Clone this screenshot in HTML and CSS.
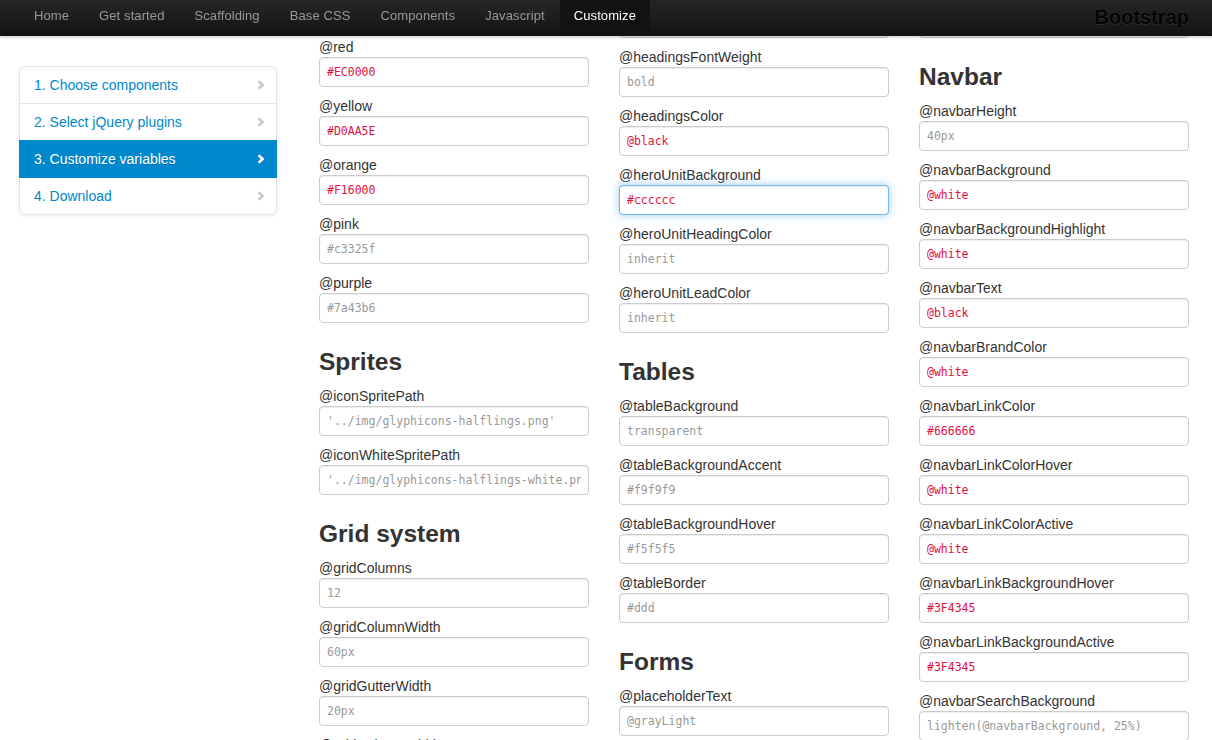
FILE: index.html
```html
<!DOCTYPE html>
<html lang="en">
<head>
<meta charset="utf-8">
<title>Customize · Bootstrap</title>
<link rel="stylesheet" href="styles.css">
</head>
<body>
<header class="navbar">
  <div class="navbar-inner">
    <nav class="nav">
      <a href="#">Home</a>
      <a href="#">Get started</a>
      <a href="#">Scaffolding</a>
      <a href="#">Base CSS</a>
      <a href="#">Components</a>
      <a href="#">Javascript</a>
      <a href="#" class="active">Customize</a>
    </nav>
    <a class="brand" href="#">Bootstrap</a>
  </div>
</header>

<div class="page">
  <aside class="sidebar">
    <ul class="sidenav">
      <li><a href="#">1. Choose components<svg class="chev" viewBox="0 0 8 10" width="8" height="10"><path d="M1.6 1.2 L5.6 5 L1.6 8.8"/></svg></a></li>
      <li><a href="#">2. Select jQuery plugins<svg class="chev" viewBox="0 0 8 10" width="8" height="10"><path d="M1.6 1.2 L5.6 5 L1.6 8.8"/></svg></a></li>
      <li class="active"><a href="#">3. Customize variables<svg class="chev" viewBox="0 0 8 10" width="8" height="10"><path d="M1.6 1.2 L5.6 5 L1.6 8.8"/></svg></a></li>
      <li><a href="#">4. Download<svg class="chev" viewBox="0 0 8 10" width="8" height="10"><path d="M1.6 1.2 L5.6 5 L1.6 8.8"/></svg></a></li>
    </ul>
  </aside>

  <main class="vars">
    <section class="col col-a">
      <div class="field"><label>@red</label><input type="text" class="set" value="#EC0000"></div>
      <div class="field"><label>@yellow</label><input type="text" class="set" value="#D0AA5E"></div>
      <div class="field"><label>@orange</label><input type="text" class="set" value="#F16000"></div>
      <div class="field"><label>@pink</label><input type="text" placeholder="#c3325f"></div>
      <div class="field"><label>@purple</label><input type="text" placeholder="#7a43b6"></div>
      <h3>Sprites</h3>
      <div class="field"><label>@iconSpritePath</label><input type="text" placeholder="'../img/glyphicons-halflings.png'"></div>
      <div class="field"><label>@iconWhiteSpritePath</label><input type="text" placeholder="'../img/glyphicons-halflings-white.png'"></div>
      <h3>Grid system</h3>
      <div class="field"><label>@gridColumns</label><input type="text" placeholder="12"></div>
      <div class="field"><label>@gridColumnWidth</label><input type="text" placeholder="60px"></div>
      <div class="field"><label>@gridGutterWidth</label><input type="text" placeholder="20px"></div>
      <div class="field"><label>@gridColumnWidth1200</label><input type="text" placeholder="70px"></div>
    </section>

    <section class="col col-b">
      <div class="field stub"><input type="text" aria-label="@headingsFontFamily"></div>
      <div class="field"><label>@headingsFontWeight</label><input type="text" placeholder="bold"></div>
      <div class="field"><label>@headingsColor</label><input type="text" class="set" value="@black"></div>
      <div class="field"><label>@heroUnitBackground</label><input type="text" class="set focus" value="#cccccc"></div>
      <div class="field"><label>@heroUnitHeadingColor</label><input type="text" placeholder="inherit"></div>
      <div class="field"><label>@heroUnitLeadColor</label><input type="text" placeholder="inherit"></div>
      <h3>Tables</h3>
      <div class="field"><label>@tableBackground</label><input type="text" placeholder="transparent"></div>
      <div class="field"><label>@tableBackgroundAccent</label><input type="text" placeholder="#f9f9f9"></div>
      <div class="field"><label>@tableBackgroundHover</label><input type="text" placeholder="#f5f5f5"></div>
      <div class="field"><label>@tableBorder</label><input type="text" placeholder="#ddd"></div>
      <h3>Forms</h3>
      <div class="field"><label>@placeholderText</label><input type="text" placeholder="@grayLight"></div>
    </section>

    <section class="col col-c">
      <div class="field stub"><input type="text" aria-label="@dropdownLinkColorHover"></div>
      <h3>Navbar</h3>
      <div class="field"><label>@navbarHeight</label><input type="text" placeholder="40px"></div>
      <div class="field"><label>@navbarBackground</label><input type="text" class="set" value="@white"></div>
      <div class="field"><label>@navbarBackgroundHighlight</label><input type="text" class="set" value="@white"></div>
      <div class="field"><label>@navbarText</label><input type="text" class="set" value="@black"></div>
      <div class="field"><label>@navbarBrandColor</label><input type="text" class="set" value="@white"></div>
      <div class="field"><label>@navbarLinkColor</label><input type="text" class="set" value="#666666"></div>
      <div class="field"><label>@navbarLinkColorHover</label><input type="text" class="set" value="@white"></div>
      <div class="field"><label>@navbarLinkColorActive</label><input type="text" class="set" value="@white"></div>
      <div class="field"><label>@navbarLinkBackgroundHover</label><input type="text" class="set" value="#3F4345"></div>
      <div class="field"><label>@navbarLinkBackgroundActive</label><input type="text" class="set" value="#3F4345"></div>
      <div class="field"><label>@navbarSearchBackground</label><input type="text" placeholder="lighten(@navbarBackground, 25%)"></div>
    </section>
  </main>
</div>
</body>
</html>
```

FILE: styles.css
```css
html, body {
  margin: 0;
  padding: 0;
  height: 100%;
  overflow: hidden;
  background: #fff;
}

body {
  font-family: "Liberation Sans", Arial, Helvetica, sans-serif;
  font-size: 14px;
  line-height: 20px;
  color: #333;
}

/* ---------- top navbar ---------- */
.navbar {
  position: fixed;
  top: 0;
  left: 0;
  right: 0;
  z-index: 10;
  height: 36px;
  background: linear-gradient(to bottom, #262626, #131313);
  box-shadow: 0 1px 3px rgba(0, 0, 0, 0.25);
}

.navbar-inner {
  width: 1170px;
  margin-left: 19px;
  height: 36px;
  display: flex;
  align-items: stretch;
}

.nav {
  display: flex;
}

.nav a {
  display: block;
  padding: 7px 15px 11px;
  line-height: 18px;
  font-size: 13px;
  letter-spacing: 0.1px;
  color: #999;
  text-decoration: none;
}

.nav a.active {
  color: #fff;
  background: #121212;
  padding-left: 14px;
  padding-right: 14px;
}

.brand {
  margin-left: auto;
  font-size: 20px;
  font-weight: bold;
  line-height: 34px;
  color: #050505;
  text-decoration: none;
  text-shadow: 0 1px 0 rgba(255, 255, 255, 0.08), 0 0 2px rgba(255, 255, 255, 0.06);
}

/* ---------- page layout ---------- */
.page {
  display: flex;
  align-items: flex-start;
  padding-left: 19px;
}

.sidebar {
  width: 258px;
  margin-top: 66px;
}

.sidenav {
  list-style: none;
  margin: 0;
  padding: 0;
  background: #fff;
  border-radius: 6px;
  box-shadow: 0 1px 4px rgba(0, 0, 0, 0.065);
}

.sidenav a {
  position: relative;
  display: flex;
  align-items: center;
  justify-content: space-between;
  margin: 0 0 -1px;
  padding: 8px 11px 8px 14px;
  border: 1px solid #e5e5e5;
  color: #0088cc;
  text-decoration: none;
  font-size: 14px;
  line-height: 20px;
}

.sidenav li:first-child a {
  border-radius: 6px 6px 0 0;
}

.sidenav li:last-child a {
  border-radius: 0 0 6px 6px;
}

.sidenav .active a {
  z-index: 2;
  padding: 9px 12px 9px 15px;
  border: 0;
  background: #0088cc;
  color: #fff;
  text-shadow: 0 1px 0 rgba(0, 0, 0, 0.15);
}

.chev {
  flex: none;
  fill: none;
  stroke: #c9c9c9;
  stroke-width: 2.6;
  stroke-linecap: butt;
  stroke-linejoin: miter;
}

.sidenav .active .chev {
  stroke: #fff;
}

/* ---------- variable columns ---------- */
.vars {
  display: flex;
  gap: 30px;
  margin-left: 42px;
}

.col {
  width: 270px;
  display: flex;
  flex-direction: column;
}

.col-a { padding-top: 37px; }
.col-b { padding-top: 8px; }
.col-c { padding-top: 8px; }

.col h3 {
  margin: 10px 0 4px;
  font-size: 24.5px;
  line-height: 40px;
  font-weight: bold;
  color: #333;
}

.field {
  display: flex;
  flex-direction: column;
  margin-bottom: 9px;
}

.field label {
  display: block;
  font-size: 14px;
  line-height: 20px;
  color: #333;
}

.field input {
  box-sizing: border-box;
  width: 270px;
  height: 30px;
  margin: 0;
  padding: 0 7px 1px;
  border: 1px solid #cccccc;
  border-radius: 4px;
  background: #fff;
  box-shadow: inset 0 1px 1px rgba(0, 0, 0, 0.075);
  font-family: "DejaVu Sans Mono", "Liberation Mono", monospace;
  font-size: 11.5px;
  color: #999;
  outline: none;
}

.field input::placeholder {
  color: #999;
  opacity: 1;
}

.field input.set {
  color: #dd1144;
}

.field input.focus {
  border-color: rgba(82, 168, 236, 0.8);
  box-shadow: inset 0 1px 1px rgba(0, 0, 0, 0.075), 0 0 8px rgba(82, 168, 236, 0.6);
}
```
